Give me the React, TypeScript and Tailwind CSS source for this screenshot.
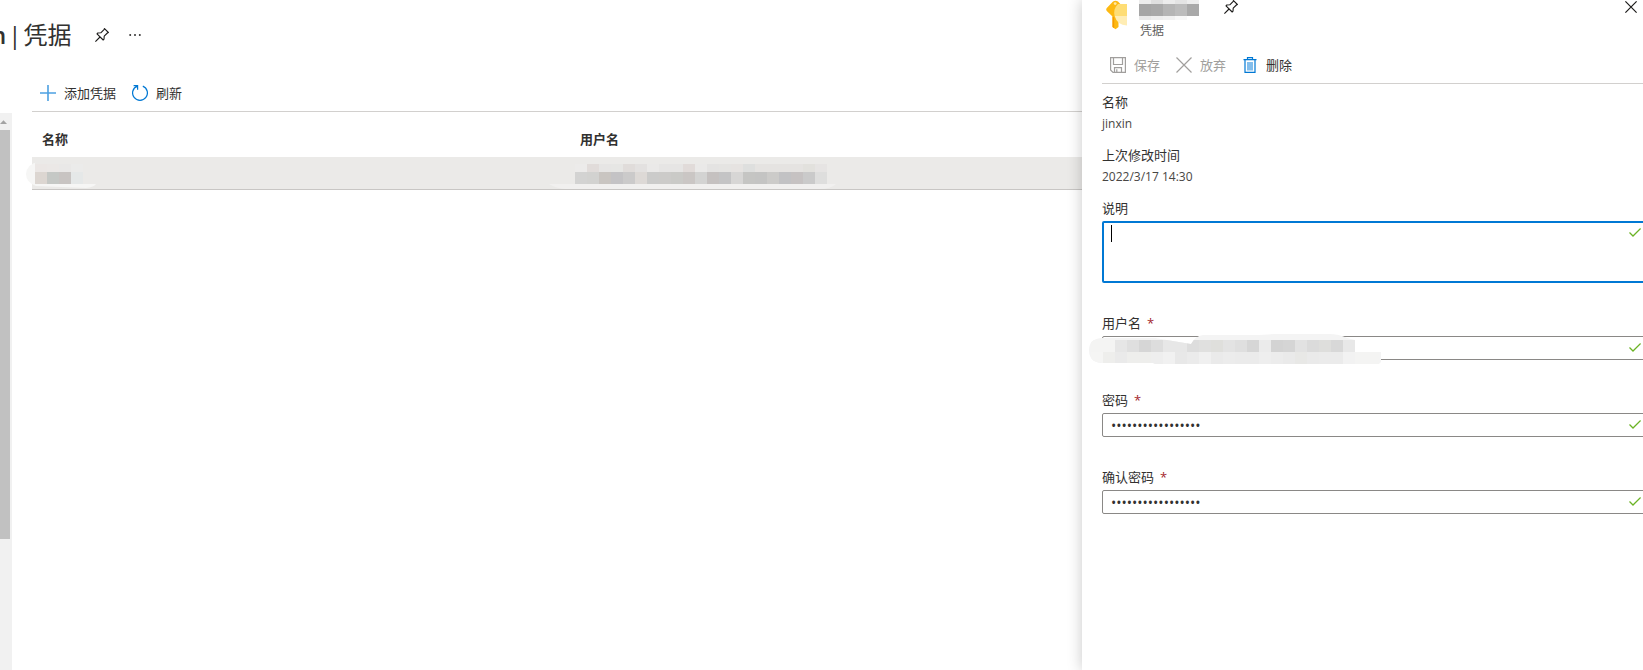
import React from 'react';

const rowNameCells = [
    ['#ebe7e5', '#ebe8e6', '#e9e8e7', '#ebebea'],
    ['#dcd6d1', '#c5c8c5', '#c8c4c2', '#e5e8e8'],
];

const rowUserCells = [
    ['#ecebea', '#e1dcda', '#e6e5e4', '#e6e6e4', '#e0dcda', '#e3e1e0', '#eae9e8', '#e6e5e4', '#e6e5e4', '#e1dbd9', '#eae9e8', '#e4e3e2', '#e5e4e2', '#e6e3e1', '#dedfde', '#e5e3e1', '#e5e3e1', '#e5e3e1', '#e5e3e1', '#e2e1dd', '#e6e4e3'],
    ['#d3d3d2', '#d2d2d0', '#c9c5c1', '#c4c3c5', '#cbcaca', '#ddd9d6', '#cbcbca', '#cccbc9', '#cacac7', '#cac6c4', '#d3d3d2', '#c5c1c0', '#c4c4c5', '#d7d6d5', '#c5c5c3', '#c4c4c3', '#cccbc9', '#c2c2c4', '#c6c2c2', '#cacaca', '#dededd'],
];

const titleCells = [
    ['#ededed', '#e0e0e0', '#ececec', '#e4e4e4', '#ededed'],
    ['#a6a6a6', '#a9a9a9', '#b5b5b5', '#bcbcbc', '#a9a9a9'],
    ['#e9e9e9', '#eeeeee', '#f1f1f1', '#f8f8f8', '#ffffff'],
];

const fieldCells = [
    ['#f4f4f3', '#f4f4f3', '#e6e6e6', '#dfdfdf', '#d6d6d6', '#dddddd', '#e7e7e7', '#e7e7e7', '#dddddd', '#e0e0df', '#dfdfdc', '#e3e3e3', '#dfdfdf', '#d6d6d6', '#ebebeb', '#d3d3d3', '#d5d5d5', '#e2e2e2', '#dbdbdb', '#dededc', '#d8d8d8', '#e8e8e8'],
    ['#f5f5f4', '#eeeeec', '#eaeaea', '#eeeeec', '#eeeeec', '#eeeeee', '#f1f1f1', '#e8e8e8', '#ebebeb', '#f0f0f0', '#eaeaea', '#ececec', '#ebebeb', '#ebebeb', '#eeeeee', '#ececec', '#eaeaea', '#e8e8e6', '#eaeaea', '#ebebeb', '#ebebeb', '#f2f2f2', '#f4f4f3', '#f4f4f3'],
];

export default function App() {
    return (
        <div className="min-h-screen bg-white flex overflow-hidden font-['Open_Sans','Noto_Sans_CJK_SC',sans-serif] text-[13px] text-[#323130]">
            <main className="flex-1 min-w-0 overflow-hidden">
                {/* Page title */}
                <header className="h-[70px] flex items-center">
                    <h1 className="flex items-center gap-[2px] text-2xl -ml-[9px]">
                        <span className="font-semibold">n</span>
                        <span>|</span>
                        <span>凭据</span>
                    </h1>
                    <button aria-label="固定" className="ml-6"><PinIcon /></button>
                    <button aria-label="更多" className="ml-5">
                        <svg width="12" height="4" viewBox="0 0 12 4" fill="#323130">
                            <circle cx="1.2" cy="2" r="1" />
                            <circle cx="6" cy="2" r="1" />
                            <circle cx="10.8" cy="2" r="1" />
                        </svg>
                    </button>
                </header>

                <div className="flex items-start">
                    {/* Menu scrollbar */}
                    <div className="w-3 h-[calc(100vh-113px)] mt-[43px] shrink-0 bg-[#f1f1f1]">
                        <svg className="block" width="10" height="17" viewBox="0 0 10 17">
                            <path d="M0 11 L3.5 7.2 L7 11 Z" fill="#a3a3a3" />
                        </svg>
                        <div className="w-[10px] h-[409px] bg-[#c1c1c1]" />
                    </div>

                    <section className="flex-1 min-w-0 ml-5">
                        <div className="h-[42px] border-b border-[#d2d0ce] pt-1 pl-2 flex items-center gap-4">
                            <ToolButton icon={<PlusIcon />} label="添加凭据" />
                            <ToolButton icon={<RefreshIcon />} label="刷新" />
                        </div>

                        <table className="w-full table-fixed text-left leading-[18px]">
                            <thead>
                                <tr>
                                    <th className="w-[538px] h-[45px] pl-[10px] pb-[9px] align-bottom font-bold">名称</th>
                                    <th className="pl-[10px] pb-[9px] align-bottom font-bold">用户名</th>
                                </tr>
                            </thead>
                            <tbody>
                                <tr className="h-8 bg-[#ebeae8] border-b border-[#c8c6c4]">
                                    <td className="relative">
                                        <svg className="absolute -left-[6px] top-[5px]" width="72" height="27" viewBox="0 0 72 27">
                                            <path d="M12 0 Q1 2 0 12 Q0 20 10 24 L60 26 Q68 25 70 22 L46 22 L9 21 L9 1 Z" fill="#f6f6f5" />
                                            <Cells rows={rowNameCells} x={9} tops={[2, 10, 22]} />
                                        </svg>
                                    </td>
                                    <td className="relative">
                                        <svg className="absolute -left-[21px] top-[7px]" width="290" height="25" viewBox="0 0 290 25">
                                            <path d="M0 20 H287 Q282 25 270 25 H18 Q8 25 0 20 Z" fill="#f1f0ef" />
                                            <Cells rows={rowUserCells} x={26} tops={[0, 8, 20]} />
                                        </svg>
                                    </td>
                                </tr>
                            </tbody>
                        </table>
                    </section>
                </div>
            </main>

            {/* Detail panel */}
            <aside className="relative w-[561px] shrink-0 bg-white overflow-x-clip shadow-[0_0_14px_rgba(0,0,0,0.22)]">
                <header className="h-[47px] pl-6 pr-[6px] flex items-start">
                    <KeyIcon />
                    <div className="ml-3">
                        <svg className="block" width="60" height="21" viewBox="0 0 60 21">
                            <Cells rows={titleCells} x={0} tops={[0, 4, 16, 20]} />
                        </svg>
                        <div className="pl-px text-xs leading-5 text-[#605e5c]">凭据</div>
                    </div>
                    <button aria-label="固定" className="ml-[25px]"><PinIcon /></button>
                    <button aria-label="关闭" className="ml-auto pt-px">
                        <CrossIcon size={12} color="#1b1a19" />
                    </button>
                </header>

                <div className="ml-5 h-[37px] border-b border-[#d2d0ce] pl-2 flex items-center gap-4">
                    <ToolButton icon={<SaveIcon />} label="保存" disabled />
                    <ToolButton icon={<CrossIcon size={16} color="#a19f9d" />} label="放弃" disabled />
                    <ToolButton icon={<TrashIcon />} label="删除" />
                </div>

                <form className="ml-5 -mr-2 pt-2 leading-[21px]">
                    <dl>
                        <dt>名称</dt>
                        <dd className="mb-[11px] text-xs leading-[21px] text-[#484644]">jinxin</dd>
                        <dt>上次修改时间</dt>
                        <dd className="mb-[11px] text-xs leading-[21px] text-[#484644]">2022/3/17 14:30</dd>
                    </dl>

                    <div className="relative mb-[30px]">
                        <label htmlFor="description" className="block mb-[2px]">说明</label>
                        <textarea id="description" className="block w-full h-[62px] resize-none rounded-xs border-2 border-[#0078d4] px-2 outline-none caret-transparent" />
                        <span className="absolute left-[9px] top-[27px] w-px h-[17px] bg-black" />
                        <CheckIcon />
                    </div>

                    <Field id="username" label="用户名">
                        <svg className="absolute -left-[13px] top-[21px]" width="294" height="30" viewBox="0 0 294 30">
                            <clipPath id="smear">
                                <path d="M12 4 H66 L102 10 Q106 2 114 1 L170 1 L185 0 H240 Q250 0 258 4 L266 6 V18 H292 V28 L290 30 H66 L64 29 H12 Q0 28 0 16 Q0 5 12 4 Z" />
                            </clipPath>
                            <g clipPath="url(#smear)">
                                <rect width="294" height="30" fill="#f4f4f4" />
                                <Cells rows={fieldCells} x={2} tops={[6, 18, 30]} />
                            </g>
                        </svg>
                    </Field>
                    <Field id="password" label="密码" value="aaaaaaaaaaaaaaaaa" />
                    <Field id="confirm" label="确认密码" value="aaaaaaaaaaaaaaaaa" />
                </form>
            </aside>
        </div>
    );
}

function ToolButton({ icon, label, disabled = false }: { icon: React.ReactNode, label: string, disabled?: boolean }) {
    return (
        <button type="button" disabled={disabled} className="flex items-center gap-2 leading-5 disabled:text-[#a19f9d]">
            {icon}
            <span>{label}</span>
        </button>
    );
}

function Field({ id, label, value, children }: { id: string, label: string, value?: string, children?: React.ReactNode }) {
    return (
        <div className="relative mb-[30px]">
            <label htmlFor={id} className="block mb-[2px]">
                {label}<span className="ml-[6px] text-[#a4262c]">*</span>
            </label>
            <input
                id={id}
                type={value ? 'password' : 'text'}
                defaultValue={value}
                autoComplete="off"
                className="block w-full h-6 rounded-xs border border-[#8a8886] px-2 text-sm outline-none"
            />
            {children}
            <CheckIcon />
        </div>
    );
}

// Pixelated block, one colour per 12px cell
function Cells({ rows, x, tops }: { rows: string[][], x: number, tops: number[] }) {
    return (
        <g shapeRendering="crispEdges">
            {rows.map((row, r) => row.map((fill, i) => (
                <rect key={`${r}-${i}`} x={x + i * 12} y={tops[r]} width="12" height={tops[r + 1] - tops[r]} fill={fill} />
            )))}
        </g>
    );
}

function CheckIcon() {
    return (
        <svg className="absolute right-[10px] top-[30px]" width="12" height="10" viewBox="0 0 12 10" fill="none" stroke="#6bb325" strokeWidth="1.3">
            <path d="M.5 4.5 L4 8 L11.6 .5" />
        </svg>
    );
}

function PinIcon() {
    return (
        <svg width="14" height="14" viewBox="0 0 14 14" fill="none" stroke="#1b1a19" strokeWidth="1.1" strokeLinejoin="round">
            <path d="M9.5 .6 L13.4 4.5 L12.4 5 L9.2 8.2 L9 11.2 L8.2 12 L2 5.8 L2.8 5 L5.8 4.8 L9 1.6 Z M5 9 L.4 13.6" />
        </svg>
    );
}

function CrossIcon({ size, color }: { size: number, color: string }) {
    return (
        <svg width={size} height={size} viewBox="0 0 16 16" fill="none" stroke={color} strokeWidth={size === 12 ? 1.6 : 1.2}>
            <path d="M.5 .5 L15.5 15.5 M15.5 .5 L.5 15.5" />
        </svg>
    );
}

function PlusIcon() {
    return (
        <svg width="16" height="16" viewBox="0 0 16 16" fill="none" stroke="#0078d4" strokeOpacity="0.7" strokeWidth="1.6">
            <path d="M8 0 V16 M0 8 H16" />
        </svg>
    );
}

function RefreshIcon() {
    return (
        <svg width="16" height="16" viewBox="0 0 16 16" fill="none" stroke="#0078d4" strokeWidth="1.2">
            <path d="M10.8 1.1 A7.4 7.4 0 1 1 5.2 1.1 M1.6 .7 H5.6 V4.7" />
        </svg>
    );
}

function SaveIcon() {
    return (
        <svg width="16" height="16" viewBox="0 0 16 16" fill="none" stroke="#a19f9d" strokeWidth="1.2">
            <path d="M.6 .6 H15.4 V15.4 H3 L.6 13 Z M3.5 .6 V7.5 H12.5 V.6 M4.5 15.4 V10.6 H11.5 V15.4 M6.8 12.2 V15.4" />
        </svg>
    );
}

function TrashIcon() {
    return (
        <svg width="16" height="16" viewBox="0 0 16 16" fill="none" stroke="#0078d4" strokeWidth="1.2">
            <rect x="5" y="5" width="6" height="8.5" fill="#83beec" stroke="none" />
            <path d="M1.5 2.6 H14.5 M5.5 2.6 V.6 H10.5 V2.6 M3 2.6 V15.4 H13 V2.6" />
        </svg>
    );
}

function KeyIcon() {
    return (
        <svg width="21" height="30" viewBox="0 0 21 30">
            <path d="M7 1.6 Q9.5 -.2 12 1.6 L18 8 V11 L12.5 16.5 V27 L9.5 29.2 L6.5 27 V16.5 L.8 11 Q-.4 9.5 .8 8 Z" fill="#fdb912" />
            <path d="M6.5 16.5 L8.2 17.5 V28.3 L6.5 27 Z" fill="#f59b00" />
            <circle cx="9.2" cy="3.6" r="1.4" fill="#ffe9a8" />
            <path d="M12 4 H21 V16 H8.6 Q7 9 12 4 Z" fill="#fedd75" />
            <path d="M8.6 16 H21 V25.4 Q11.5 25.5 8.6 16 Z" fill="#ffedb4" />
        </svg>
    );
}
